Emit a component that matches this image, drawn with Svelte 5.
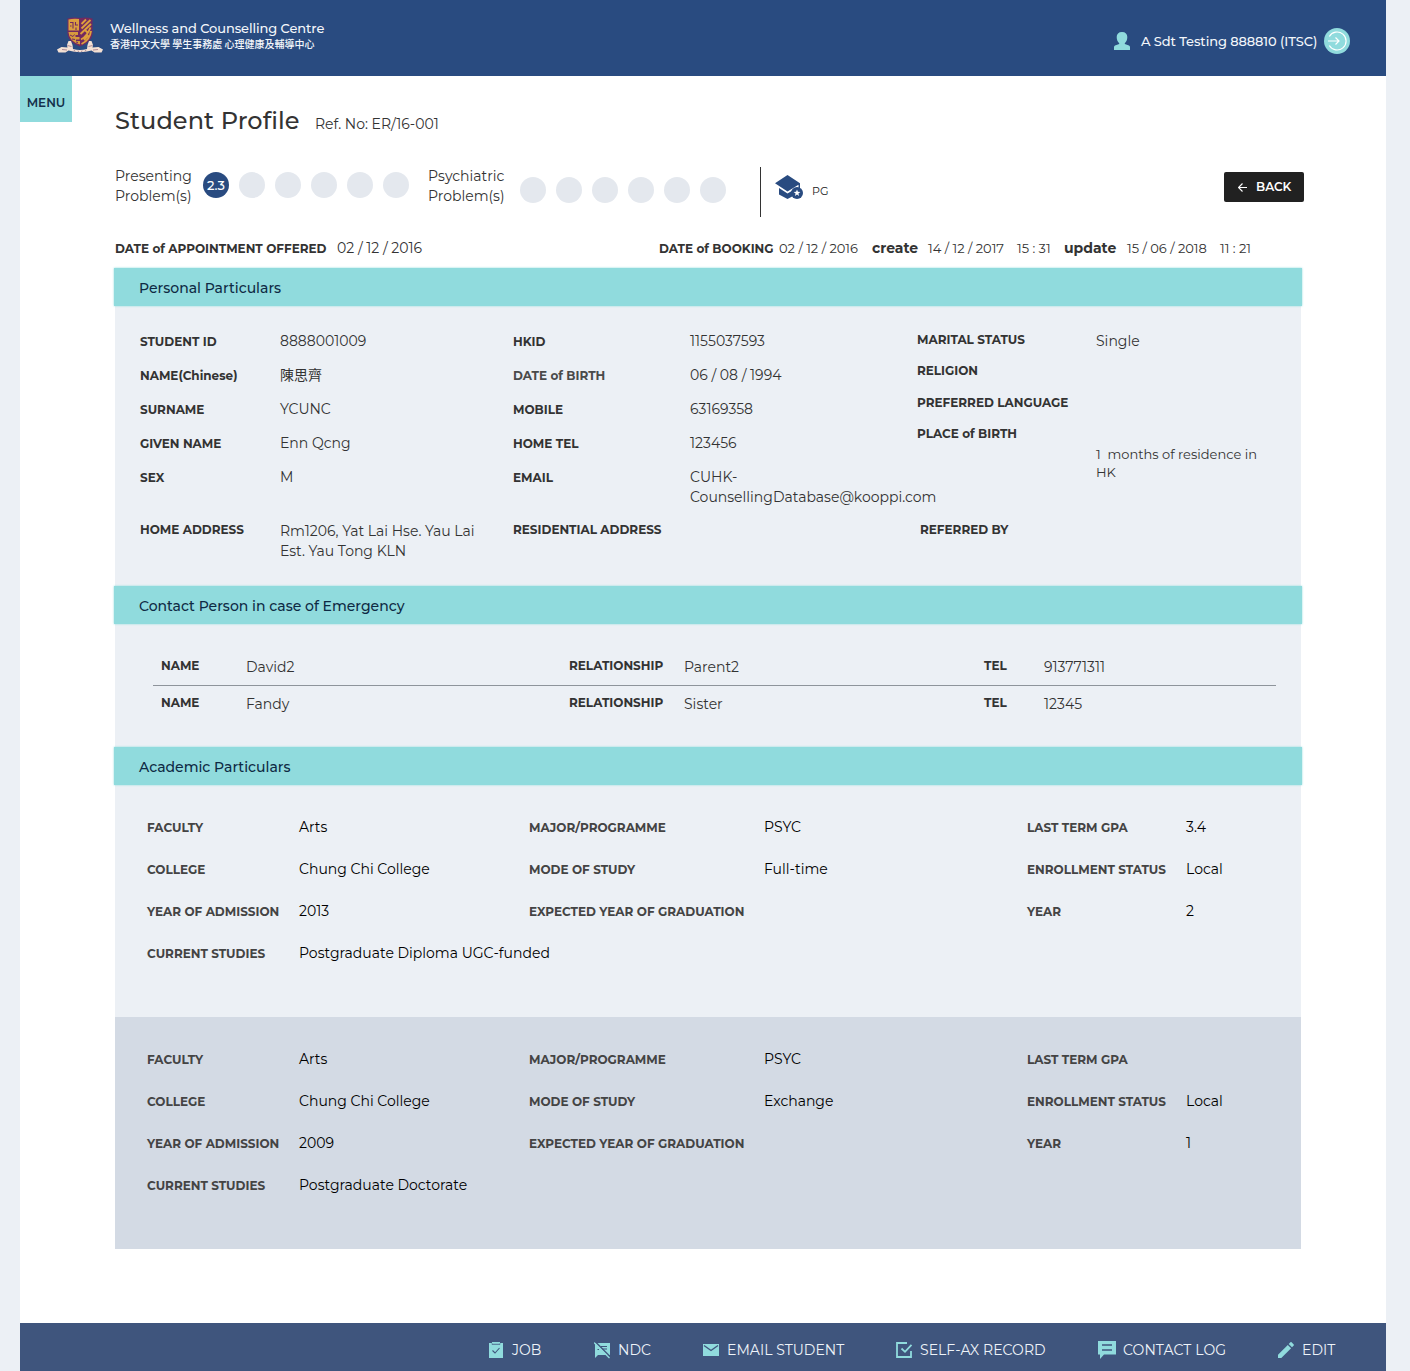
<script>
  const presenting = ['2.3', '', '', '', '', ''];
  const psychiatric = ['', '', '', '', '', ''];

  const identity = [
    ['STUDENT ID', '8888001009'],
    ['NAME(Chinese)', '陳思齊'],
    ['SURNAME', 'YCUNC'],
    ['GIVEN NAME', 'Enn Qcng'],
    ['SEX', 'M']
  ];
  const reach = [
    ['HKID', '1155037593'],
    ['DATE of BIRTH', '06 / 08 / 1994'],
    ['MOBILE', '63169358'],
    ['HOME TEL', '123456'],
    ['EMAIL', 'CUHK-CounsellingDatabase@kooppi.com']
  ];
  const background = ['MARITAL STATUS', 'RELIGION', 'PREFERRED LANGUAGE', 'PLACE of BIRTH'];

  const contacts = [
    { name: 'David2', relationship: 'Parent2', tel: '913771311' },
    { name: 'Fandy', relationship: 'Sister', tel: '12345' }
  ];

  const studies = [
    {
      faculty: 'Arts', major: 'PSYC', gpa: '3.4',
      college: 'Chung Chi College', mode: 'Full-time', enrollment: 'Local',
      admission: '2013', graduation: '', year: '2',
      current: 'Postgraduate Diploma UGC-funded'
    },
    {
      faculty: 'Arts', major: 'PSYC', gpa: '',
      college: 'Chung Chi College', mode: 'Exchange', enrollment: 'Local',
      admission: '2009', graduation: '', year: '1',
      current: 'Postgraduate Doctorate'
    }
  ];
</script>

{#snippet dots(items)}
  <div class="dots">
    {#each items as item}
      <span class="dot" class:filled={item}>{item}</span>
    {/each}
  </div>
{/snippet}

<div class="page">
  <header class="top">
    <svg class="crest" width="46" height="38" viewBox="0 0 46 38">
      <path d="M10.500 1.500q6-1.500 12.500-.5q6.500-1 12.500.5v15.500q-1 8.500-12.500 12.500q-11.500-4-12.500-12.500z" fill="#722a60" />
      <path d="M11.500 2.500q5-1.200 10.500-.5v11.500h-10.500z" fill="#dba040" />
      <path d="M13 5.500h3v6M18.500 5v3h2.500M19 10.500v2.500M13 9h1.500" fill="none" stroke="#722a60" stroke-width="1.100" />
      <path d="M11.500 15h9.500v3h-2.500v2h4v2.500h-3.500v1.500h4v3.500q-11-3-11.500-12.500z" fill="#d79b3d" />
      <path d="M13 18l3 1.500 1.500-2M15 22l3 .5M19 25l2 .5" fill="none" stroke="#722a60" stroke-width="1" />
      <path d="M24.500 27q8.500-4 9.500-13M24 22.500q6-3 9.500-12M23.500 17l10.500-10M24.500 11.500l9-8.500M24.500 7l4.500-4.500M27 23l4.500-5M28 13l3 3" fill="none" stroke="#dea03c" stroke-width="1.900" />
      <path d="M0 32.500l4.500-2.500 6 .5-.5-2.500 1.500-4h2.500l1.500 4 .5 4q7 2 14 0l.5-4 1.500-4h2.500l1.500 4-.5 2.500 6-.5 4.500 2.500-1.500 3h-7l-3-2q-11.500 3.500-23 0l-3 2h-7z" fill="#f3e0d3" />
      <path d="M10.500 28.500l4 1M35.500 28.500l-4 1M5 32.500l5 .5M41 32.500l-5 .5M17 33l1 1.500M21 33.500l.5 1.500M25 33.500l-.5 1.500M29 33l-1 1.500" stroke="#9a7286" stroke-width="0.800" />
    </svg>
    <div class="brand">
      <div class="brand-en">Wellness and Counselling Centre</div>
      <div class="brand-zh">香港中文大學 學生事務處 心理健康及輔導中心</div>
    </div>
    <div class="user">
      <svg width="16" height="18" viewBox="0 0 16 18"><path d="M8 0C4.500 0 2.700 2 2.700 5c0 2.800 1 5 2.500 6.200v.8L1 13.500Q0 14 0 15v3h16v-3q0-1-1-1.500L10.800 12v-.8C12.300 10 13.300 7.800 13.300 5c0-3-1.800-5-5.300-5z" fill="#90dbdd" /></svg>
      <span class="user-name">A Sdt Testing 888810 (ITSC)</span>
      <svg width="26" height="26" viewBox="0 0 26 26">
        <circle cx="13" cy="13" r="13" fill="#90dbdd" />
        <path d="M5.300 8.500a9 9 0 1 1 0 9M4 13h11M11.500 9.500l3.500 3.500-3.500 3.500" fill="none" stroke="#fff" stroke-width="1.200" />
      </svg>
    </div>
  </header>

  <div class="body">
    <button class="menu">MENU</button>
    <main>
      <div class="heading">
        <h1>Student Profile</h1>
        <span class="ref">Ref. No: ER/16-001</span>
      </div>

      <div class="summary">
        <div class="caption">Presenting<br />Problem(s)</div>
        {@render dots(presenting)}
        <div class="caption second">Psychiatric<br />Problem(s)</div>
        <div class="lower">{@render dots(psychiatric)}</div>
        <div class="level">
          <svg width="29" height="25" viewBox="0 0 29 25">
            <path d="M12.500 0L25 8.200V14H23.500V9.800L12.500 16.500 0 8.200z" fill="#294b80" />
            <path d="M4 13l8.500 5.500 7.500-4.500v6L12.500 24 4 19.500z" fill="#294b80" />
            <circle cx="22" cy="18" r="6" fill="#294b80" />
            <path d="M22 14.500l.9 2.300 2.500.1-2 1.600.7 2.400-2.100-1.400-2.100 1.400.7-2.400-2-1.600 2.500-.1z" fill="#fff" />
          </svg>
          <span>PG</span>
        </div>
        <button class="back">
          <svg width="9" height="9" viewBox="0 0 9 9"><path d="M9 4.500H1M4.500.5l-4 4 4 4" fill="none" stroke="#fff" stroke-width="1.100" /></svg>
          BACK
        </button>
      </div>

      <div class="dates">
        <b>DATE of APPOINTMENT OFFERED</b><span class="large">02 / 12 / 2016</span>
        <b>DATE of BOOKING</b><span>02 / 12 / 2016</span>
        <b class="word">create</b><span>14 / 12 / 2017</span><span>15 : 31</span>
        <b class="word">update</b><span>15 / 06 / 2018</span><span>11 : 21</span>
      </div>

      <section>
        <h2>Personal Particulars</h2>
        <div class="personal">
          <dl class="pairs">
            {#each identity as [label, value]}
              <dt>{label}</dt><dd>{value}</dd>
            {/each}
          </dl>
          <dl class="pairs reach">
            {#each reach as [label, value]}
              <dt class:muted={label === 'DATE of BIRTH'}>{label}</dt><dd>{value}</dd>
            {/each}
          </dl>
          <div class="background">
            <div class="labels">
              {#each background as label}<b>{label}</b>{/each}
            </div>
            <div class="answers">
              <span>Single</span>
              <p>1 &nbsp;months of residence in HK</p>
            </div>
          </div>
          <div class="address">
            <b>HOME ADDRESS</b>
            <span>Rm1206, Yat Lai Hse. Yau Lai<br />Est. Yau Tong KLN</span>
            <b>RESIDENTIAL ADDRESS</b>
            <b>REFERRED BY</b>
          </div>
        </div>
      </section>

      <section>
        <h2>Contact Person in case of Emergency</h2>
        <div class="contacts">
          {#each contacts as c}
            <div class="contact">
              <b>NAME</b><span>{c.name}</span>
              <b>RELATIONSHIP</b><span>{c.relationship}</span>
              <b>TEL</b><span>{c.tel}</span>
            </div>
          {/each}
        </div>
      </section>

      <section>
        <h2>Academic Particulars</h2>
        {#each studies as s}
          <div class="study">
            <b>FACULTY</b><span>{s.faculty}</span>
            <b>MAJOR/PROGRAMME</b><span>{s.major}</span>
            <b>LAST TERM GPA</b><span>{s.gpa}</span>
            <b>COLLEGE</b><span>{s.college}</span>
            <b>MODE OF STUDY</b><span>{s.mode}</span>
            <b>ENROLLMENT STATUS</b><span>{s.enrollment}</span>
            <b>YEAR OF ADMISSION</b><span>{s.admission}</span>
            <b>EXPECTED YEAR OF GRADUATION</b><span>{s.graduation}</span>
            <b>YEAR</b><span>{s.year}</span>
            <b>CURRENT STUDIES</b><span class="wide">{s.current}</span>
          </div>
        {/each}
      </section>
    </main>
  </div>

  <footer>
    <a href="#job">
      <svg width="14" height="16" viewBox="0 0 14 16"><path d="M0 1h3V0h8v1h3v15H0z" fill="#90dbdd" /><path d="M3 1.500v.8h8v-.8" fill="none" stroke="#3f557d" stroke-width="0.800" /><path d="M3.500 8.500l2.500 2.500 4.500-5" fill="none" stroke="#3f557d" stroke-width="1.100" /></svg>
      <span>JOB</span>
    </a>
    <a href="#ndc">
      <svg width="17" height="17" viewBox="0 0 17 17"><path d="M1 1h15v12H4l-3 3z" fill="#90dbdd" /><path d="M7 4.500h6M8 7h5M3.500 7.500h1.500" stroke="#3f557d" stroke-width="1.200" /><path d="M1.500 0L17 15.500" stroke="#3f557d" stroke-width="1.500" /><path d="M0 .5L15.500 16" stroke="#90dbdd" stroke-width="1.300" /></svg>
      <span>NDC</span>
    </a>
    <a href="#email">
      <svg width="16" height="12" viewBox="0 0 16 12"><path d="M0 0h16v12H0z" fill="#90dbdd" /><path d="M1 1.500l7 5 7-5" fill="none" stroke="#3f557d" stroke-width="1.400" /></svg>
      <span>EMAIL STUDENT</span>
    </a>
    <a href="#self-ax">
      <svg width="17" height="16" viewBox="0 0 17 16"><path d="M11 1H1v14h14V9M5.500 6.500L9 9.800l6.500-7" fill="none" stroke="#90dbdd" stroke-width="1.800" /></svg>
      <span>SELF-AX RECORD</span>
    </a>
    <a href="#contact-log">
      <svg width="18" height="18" viewBox="0 0 18 18"><path d="M0 0h18v13.500H6L2 18v-4.500H0z" fill="#90dbdd" /><path d="M4 4h10M4 9h10" stroke="#3f557d" stroke-width="1.700" /></svg>
      <span>CONTACT LOG</span>
    </a>
    <a href="#edit">
      <svg width="16" height="16" viewBox="0 0 16 16"><path d="M0 12.700L9.800 2.900l3.300 3.300L3.300 16H0zM10.700 2l1.700-1.700q.6-.6 1.200 0l2.100 2.100q.6.600 0 1.200L14 5.300z" fill="#90dbdd" /></svg>
      <span>EDIT</span>
    </a>
  </footer>
</div>

<style>
  :global(body) {
    background: #ecf0f5;
  }

  .page {
    width: 1366px;
    height: 1371px;
    margin-left: 20px;
    display: flex;
    flex-direction: column;
    background: #fff;
    color: #333;
    font-family: Montserrat, Inter, 'Noto Sans CJK TC', sans-serif;
    font-size: 14px;
    line-height: 20px;
  }

  svg {
    display: block;
    flex: none;
  }

  b,
  dt {
    font-size: 12px;
    font-weight: 700;
    white-space: nowrap;
  }

  button {
    border: 0;
    padding: 0;
    font: inherit;
  }

  .top {
    box-sizing: border-box;
    height: 76px;
    flex: none;
    display: flex;
    align-items: flex-start;
    padding: 17px 36px 0 37px;
    background: #294b80;
    color: #f4f7fb;
  }

  .brand {
    margin: 2px 0 0 7px;
  }

  .brand-en {
    font-size: 13px;
    font-weight: 500;
    line-height: 18px;
    letter-spacing: -0.1px;
  }

  .brand-zh {
    font-family: 'Noto Sans CJK TC', sans-serif;
    font-size: 10px;
    font-weight: 500;
    line-height: 14px;
  }

  .user {
    display: flex;
    align-items: center;
    margin: 11px 0 0 auto;
  }

  .user-name {
    width: 176px;
    margin: 0 7px 0 11px;
    font-size: 13px;
    font-weight: 500;
    letter-spacing: -0.09px;
    white-space: nowrap;
  }

  .body {
    flex: 1;
    display: flex;
    align-items: flex-start;
  }

  .menu {
    width: 52px;
    height: 46px;
    padding-top: 7px;
    background: #90dbdd;
    color: #14304b;
    font-size: 12px;
    font-weight: 600;
  }

  main {
    width: 1186px;
    margin-left: 43px;
    padding-top: 29px;
  }

  .heading {
    display: flex;
    align-items: baseline;
    height: 62px;
  }

  h1 {
    width: 200px;
    margin: 0;
    font-size: 24px;
    font-weight: 500;
    line-height: 32px;
    letter-spacing: 0.1px;
  }

  .summary {
    display: flex;
    align-items: flex-start;
    height: 50px;
    margin-right: -3px;
  }

  .caption {
    width: 88px;
    margin-top: -1px;
  }

  .caption.second {
    width: 92px;
    margin-left: 19px;
  }

  .dots {
    display: flex;
    gap: 10px;
    padding-top: 5px;
  }

  .lower {
    padding-top: 5px;
  }

  .dot {
    width: 26px;
    height: 26px;
    border-radius: 50%;
    background: #e4e8ee;
    font-size: 13px;
    font-weight: 500;
    line-height: 27px;
    text-align: center;
  }

  .filled {
    background: #294b80;
    color: #fff;
  }

  .level {
    box-sizing: border-box;
    height: 50px;
    display: flex;
    gap: 8px;
    margin-left: 34px;
    padding: 8px 0 0 14px;
    border-left: 1px solid #333;
    color: #222;
    font-size: 11px;
  }

  .level span {
    padding-top: 6px;
  }

  .back {
    width: 80px;
    height: 30px;
    display: flex;
    align-items: center;
    gap: 9px;
    margin: 5px 0 0 auto;
    padding-left: 14px;
    border-radius: 2px;
    background: #212121;
    color: #fff;
    font-size: 12px;
    font-weight: 600;
  }

  .dates {
    display: grid;
    grid-template-columns: 222px 322px 120px 93px 56px 89px 47px 63px 93px 31px;
    align-items: center;
    padding: 21px 0 10px;
    font-size: 13px;
    white-space: nowrap;
  }

  .dates b {
    padding-top: 1px;
    margin-bottom: -1px;
  }

  .dates .large {
    font-size: 14px;
  }

  .dates .word {
    margin: 0;
    padding: 0;
    font-size: 14px;
  }

  h2 {
    height: 38px;
    margin: 0 -1px;
    padding-left: 25px;
    background: #90dbdd;
    box-shadow: 0 0 2px #90dbdd;
    color: #0e2a44;
    font-size: 14px;
    font-weight: 500;
    line-height: 40px;
  }

  section {
    background: #ecf0f5;
  }

  .personal {
    box-sizing: border-box;
    height: 280px;
    display: grid;
    grid-template-columns: 373px 404px 1fr;
    grid-template-rows: 189px auto;
    padding: 25px 0 0 25px;
  }

  .pairs {
    display: grid;
    grid-template-columns: 140px 200px;
    grid-auto-rows: minmax(20px, auto);
    align-content: start;
    row-gap: 14px;
    margin: 0;
  }

  .pairs dt {
    padding-top: 1px;
    margin-bottom: -1px;
  }

  .pairs dd {
    margin: 0;
  }

  .pairs.reach {
    grid-template-columns: 177px 200px;
  }

  .pairs .muted {
    color: #4a4a4a;
  }

  .background {
    display: flex;
  }

  .labels {
    width: 179px;
    display: flex;
    flex-direction: column;
    gap: 11.400px;
    margin-top: -1px;
  }

  .answers p {
    width: 180px;
    margin: 94px 0 0;
    font-size: 13px;
    line-height: 18px;
  }

  .address {
    grid-column: 1 / -1;
    display: grid;
    grid-template-columns: 140px 233px 407px 1fr;
    align-items: start;
  }

  .address span {
    padding-top: 1px;
    white-space: nowrap;
  }

  .contacts {
    box-sizing: border-box;
    height: 123px;
    padding: 25px 25px 0 38px;
  }

  .contact {
    display: grid;
    grid-template-columns: 85px 323px 115px 300px 60px 1fr;
    padding: 7px 8px 8px;
  }

  .contact span {
    padding-top: 1px;
  }

  .contact + .contact {
    border-top: 1px solid #8e949b;
  }

  .study {
    box-sizing: border-box;
    height: 232px;
    display: grid;
    grid-template-columns: 152px 230px 235px 263px 159px 1fr;
    grid-auto-rows: 42px;
    padding: 21px 0 0 32px;
    line-height: 42px;
  }

  .study b {
    padding-top: 1px;
    margin-bottom: -1px;
    color: #444;
  }

  .study span {
    color: #000;
  }

  .study .wide {
    grid-column: 2 / -1;
  }

  .study + .study {
    background: #d3dae4;
  }

  footer {
    height: 48px;
    flex: none;
    box-sizing: border-box;
    display: grid;
    grid-template-columns: 105px 109px 193px 202px 180px 1fr;
    padding: 6px 0 0 469px;
    background: #3f557d;
  }

  footer a {
    display: grid;
    grid-template-columns: 24px auto;
    align-items: center;
    justify-content: start;
    color: #eef3f9;
    letter-spacing: 0.05px;
    text-decoration: none;
    white-space: nowrap;
  }

  footer a:first-child {
    grid-template-columns: 23px auto;
  }

  footer a:nth-child(5) {
    grid-template-columns: 25px auto;
    letter-spacing: 0.1px;
  }
</style>
